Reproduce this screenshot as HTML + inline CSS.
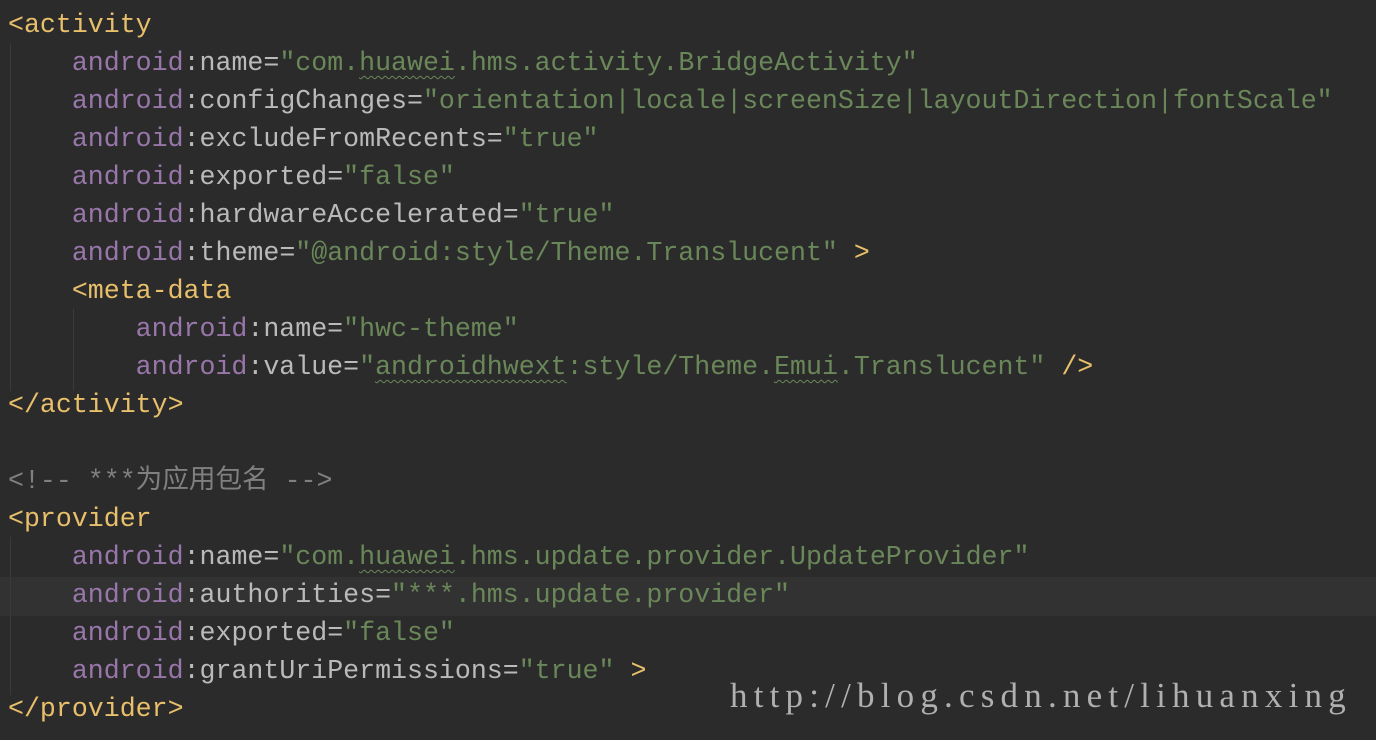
<!DOCTYPE html>
<html><head><meta charset="utf-8"><style>
html,body{margin:0;padding:0;background:#2b2b2b;width:1376px;height:740px;overflow:hidden}
.c{position:absolute;left:8px;top:6px;font-family:"Liberation Mono","Noto Sans CJK SC",monospace;font-size:26.6px;line-height:38px;color:#bababa}
.l{height:38px;white-space:pre}
.t{color:#e8bf6a}.n{color:#9876aa}.s{color:#6a8759}.m{color:#808080}
.w{text-decoration:underline wavy #6a8759;text-decoration-thickness:1px;text-underline-offset:5px}
.hl{position:absolute;left:0;top:577px;width:1376px;height:39px;background:#323232}
.g{position:absolute;width:1px;background:#3b3b3b}
.wm{position:absolute;left:730px;top:676px;font-family:"Liberation Serif","Noto Serif CJK SC",serif;font-size:35px;color:#b0b0b0;letter-spacing:6.2px}
</style></head><body>
<div class="hl"></div>
<div class="g" style="left:10px;top:43px;height:348px"></div>
<div class="g" style="left:73px;top:309px;height:82px"></div>
<div class="g" style="left:10px;top:537px;height:158px"></div>
<div class="c"><div class="l"><span class="t">&lt;activity</span></div><div class="l">    <span class="n">android</span>:name=<span class="s">"com.<span class="w">huawei</span>.hms.activity.BridgeActivity"</span></div><div class="l">    <span class="n">android</span>:configChanges=<span class="s">"orientation|locale|screenSize|layoutDirection|fontScale"</span></div><div class="l">    <span class="n">android</span>:excludeFromRecents=<span class="s">"true"</span></div><div class="l">    <span class="n">android</span>:exported=<span class="s">"false"</span></div><div class="l">    <span class="n">android</span>:hardwareAccelerated=<span class="s">"true"</span></div><div class="l">    <span class="n">android</span>:theme=<span class="s">"@android:style/Theme.Translucent"</span> <span class="t">&gt;</span></div><div class="l">    <span class="t">&lt;meta-data</span></div><div class="l">        <span class="n">android</span>:name=<span class="s">"hwc-theme"</span></div><div class="l">        <span class="n">android</span>:value=<span class="s">"<span class="w">androidhwext</span>:style/Theme.<span class="w">Emui</span>.Translucent"</span> <span class="t">/&gt;</span></div><div class="l"><span class="t">&lt;/activity&gt;</span></div><div class="l"> </div><div class="l"><span class="m">&lt;!-- ***为应用包名 --&gt;</span></div><div class="l"><span class="t">&lt;provider</span></div><div class="l">    <span class="n">android</span>:name=<span class="s">"com.<span class="w">huawei</span>.hms.update.provider.UpdateProvider"</span></div><div class="l">    <span class="n">android</span>:authorities=<span class="s">"***.hms.update.provider"</span></div><div class="l">    <span class="n">android</span>:exported=<span class="s">"false"</span></div><div class="l">    <span class="n">android</span>:grantUriPermissions=<span class="s">"true"</span> <span class="t">&gt;</span></div><div class="l"><span class="t">&lt;/provider&gt;</span></div></div>
<div class="wm">http://blog.csdn.net/lihuanxing</div>
</body></html>
